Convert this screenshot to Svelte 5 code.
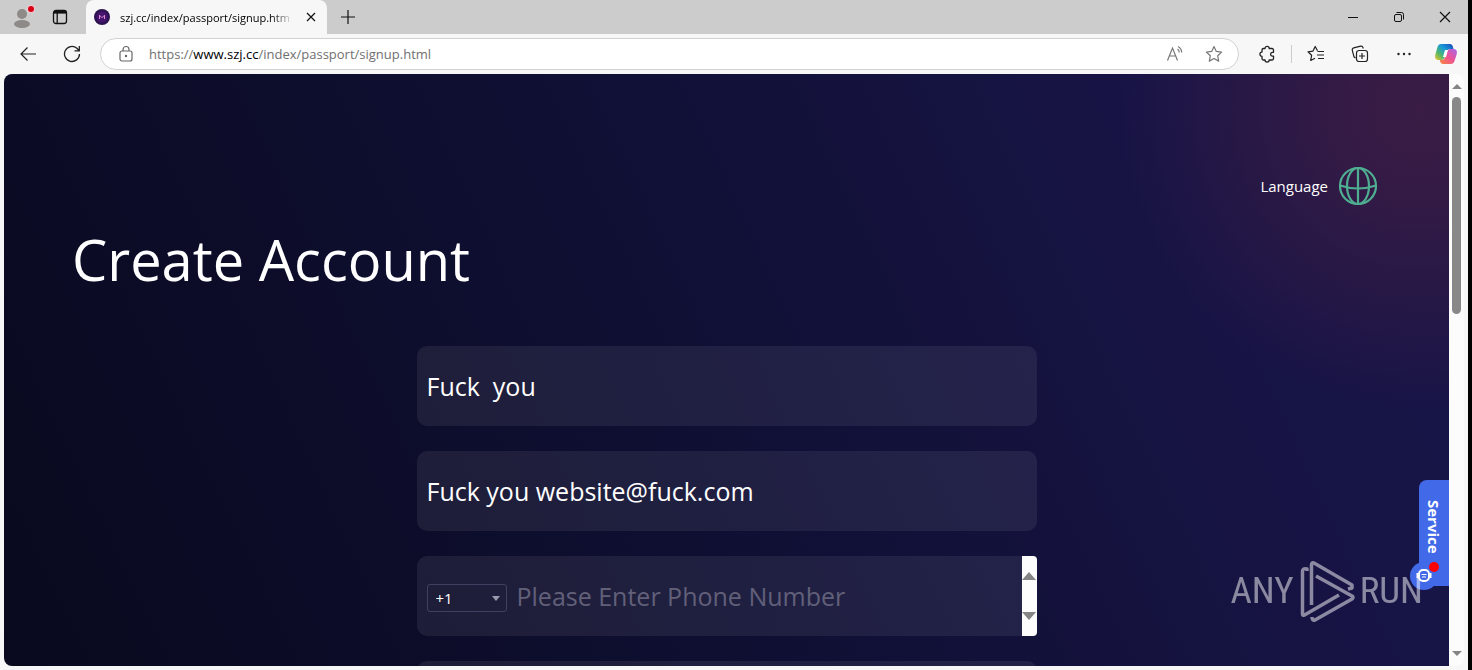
<script lang="ts">
  let name = $state('Fuck  you');
  let email = $state('Fuck you website@fuck.com');
  let phone = $state('');
  let password = $state('');
  let code = $state('+1');
</script>

<div class="window">
  <header class="tabs">
    <button class="icon profile" type="button" aria-label="Profile">
      <svg width="26" height="26" viewBox="0 0 26 26">
        <circle cx="13" cy="10" r="5" fill="#8d8a88" />
        <ellipse cx="13" cy="20" rx="8" ry="4" fill="#8d8a88" />
        <circle cx="22" cy="5" r="4" fill="#f3c9cd" />
        <circle cx="22" cy="5" r="3" fill="#d80015" />
      </svg>
    </button>
    <button class="icon workspaces" type="button" aria-label="Tab actions">
      <svg width="16" height="16" viewBox="0 0 16 16" fill="none" stroke="#111" stroke-width="1.3">
        <rect x="1.5" y="1.5" width="13" height="13" rx="2.5" />
        <path d="M1.5 3.8h13M5.2 4v10.5" />
        <path d="M2 3h12" stroke-width="2.4" />
      </svg>
    </button>
    <div class="tab">
      <svg width="16" height="16" viewBox="0 0 16 16">
        <circle cx="8" cy="8" r="8" fill="#2c1250" />
        <circle cx="8" cy="8" r="5.5" fill="#44146e" />
        <path d="M5.5 10V6.2L8 8.8l2.5-2.6V10" fill="none" stroke="#e08ad0" />
      </svg>
      <span class="tab-title">szj.cc/index/passport/signup.htm</span>
      <button class="icon close-tab" type="button" aria-label="Close tab">
        <svg width="10" height="10" viewBox="0 0 10 10" stroke="#111" stroke-width="1.2"><path d="M1 1l8 8M9 1L1 9" /></svg>
      </button>
    </div>
    <button class="icon new-tab" type="button" aria-label="New tab">
      <svg width="14" height="14" viewBox="0 0 14 14" stroke="#111" stroke-width="1.2"><path d="M7 0v14M0 7h14" /></svg>
    </button>
    <div class="controls">
      <button class="icon" type="button" aria-label="Minimize">
        <svg width="12" height="12" viewBox="0 0 12 12" stroke="#111"><path d="M1 6.5h10" /></svg>
      </button>
      <button class="icon" type="button" aria-label="Restore">
        <svg width="12" height="12" viewBox="0 0 12 12" fill="none" stroke="#111">
          <rect x="1.5" y="3.5" width="7" height="7" rx="1.5" />
          <path d="M3.5 1.5h5a2 2 0 0 1 2 2v5" />
        </svg>
      </button>
      <button class="icon" type="button" aria-label="Close window">
        <svg width="12" height="12" viewBox="0 0 12 12" stroke="#111" stroke-width="1.2"><path d="M1 1l10 10M11 1L1 11" /></svg>
      </button>
    </div>
  </header>

  <nav class="toolbar">
    <button class="icon" type="button" aria-label="Back">
      <svg width="18" height="16" viewBox="0 0 18 16" fill="none" stroke="#222" stroke-width="1.2"><path d="M17 8H2M8.5 1.5L2 8l6.5 6.5" /></svg>
    </button>
    <button class="icon" type="button" aria-label="Refresh">
      <svg width="18" height="18" viewBox="0 0 18 18" fill="none" stroke="#222" stroke-width="1.3">
        <path d="M16.5 9a7.5 7.5 0 1 1-2.6-5.7L16 5.5M16.3 1v4.8h-4.8" />
      </svg>
    </button>
    <div class="address">
      <svg width="16" height="18" viewBox="0 0 16 18" fill="none" stroke="#666" stroke-width="1.2">
        <rect x="2" y="6" width="12" height="10" rx="2" />
        <path d="M5 6V4.5a3 3 0 0 1 6 0V6" />
        <circle cx="8" cy="11" r=".6" fill="#666" />
      </svg>
      <a class="url" href="#top">https://<b>www.szj.cc</b>/index/passport/signup.html</a>
      <svg width="18" height="18" viewBox="0 0 18 18" fill="none" stroke="#777" stroke-width="1.2">
        <path d="M1.5 15.5L6.5 3l5 12.5M3.2 11h6.6M11.5 4a4 4 0 0 1 1.7 3.5M12 1.5a7 7 0 0 1 3.7 6" />
      </svg>
      <svg class="star" width="18" height="18" viewBox="0 0 18 18" fill="none" stroke="#777" stroke-width="1.2">
        <path stroke-linejoin="round" d="M9 1.5l2.3 4.9 5.3.7-3.9 3.7 1 5.3L9 13.5l-4.7 2.6 1-5.3L1.4 7.1l5.3-.7z" />
      </svg>
    </div>
    <div class="tools">
      <button class="icon" type="button" aria-label="Extensions">
        <svg width="18" height="18" viewBox="0 0 18 18" fill="none" stroke="#222" stroke-width="1.3">
          <path stroke-linejoin="round" d="M7 3.5a2.1 2.1 0 0 1 4.2 0h2.8a1.5 1.5 0 0 1 1.5 1.5v2.3h-1a1.9 1.9 0 0 0 0 3.8h1v2.4a1.5 1.5 0 0 1-1.5 1.5h-2.8a2.1 2.1 0 0 1-4.2 0H5.5A1.5 1.5 0 0 1 4 13.5v-2.2a2.1 2.1 0 0 1 0-4.2V5a1.5 1.5 0 0 1 1.5-1.5z" />
        </svg>
      </button>
      <i class="divider"></i>
      <button class="icon" type="button" aria-label="Favorites">
        <svg width="18" height="18" viewBox="0 0 18 18" fill="none" stroke="#222" stroke-width="1.2">
          <path stroke-linejoin="round" d="M10.5 5.8L8.2 1.5 6 6.1l-5 .7 3.6 3.5-.9 5.2L8 13.2M10.5 6.5h6.5M10 10h7M11 13.5h6" />
        </svg>
      </button>
      <button class="icon" type="button" aria-label="Collections">
        <svg width="18" height="18" viewBox="0 0 18 18" fill="none" stroke="#222" stroke-width="1.2">
          <rect x="5.5" y="5.5" width="11" height="11" rx="2.5" />
          <path d="M11 8v6M8 11h6M4.5 13L3 11.8 1.3 5.4a2 2 0 0 1 1.4-2.5l7-1.7a2 2 0 0 1 2.3 1.4l.3.9" />
        </svg>
      </button>
      <button class="icon" type="button" aria-label="Settings and more">
        <svg width="18" height="18" viewBox="0 0 18 18" fill="#222"><circle cx="3.5" cy="9" r="1.2" /><circle cx="9" cy="9" r="1.2" /><circle cx="14.5" cy="9" r="1.2" /></svg>
      </button>
      <button class="icon copilot" type="button" aria-label="Copilot">
        <svg width="24" height="24" viewBox="0 0 24 24">
          <defs>
            <linearGradient id="cool" x1="0" y1="1" x2="1" y2="0">
              <stop offset="0" stop-color="#f3c52c" /><stop offset=".3" stop-color="#55b767" /><stop offset=".6" stop-color="#179bd7" /><stop offset="1" stop-color="#1947b9" />
            </linearGradient>
            <linearGradient id="warm" x1="1" y1="0" x2="0" y2="1">
              <stop offset="0" stop-color="#a566ee" /><stop offset=".5" stop-color="#ef5293" /><stop offset="1" stop-color="#f98b3a" />
            </linearGradient>
          </defs>
          <path d="M7 2h9q2 0 2.7 2l.8 3h-3q-3 0-4 3l-1.7 5q-1 3-3.5 3H5c-4 0-4.5-2.5-3.5-6l2-7Q4.5 2 7 2z" fill="url(#cool)" />
          <path d="M17 22H9q-2 0-2.7-2L5.7 18h2q2.5 0 3.5-3l1.7-5q1-3 3.6-3H19c4 0 4.5 2.5 3.5 6l-2 6q-1 3-3.5 3z" fill="url(#warm)" />
          <path d="M11 8h3l-2 7H9z" fill="#fff" />
        </svg>
      </button>
    </div>
  </nav>

  <div class="viewport">
    <main class="page" id="top">
      <div class="language">
        <span>Language</span>
        <button class="icon" type="button" aria-label="Choose language">
          <svg width="40" height="40" viewBox="0 0 40 40" fill="none" stroke="#4fae91" stroke-width="2.2">
            <circle cx="20" cy="20" r="18" />
            <ellipse cx="20" cy="20" rx="11" ry="18" />
            <path d="M20 2v36M2 19.5q18 6 36 0" />
          </svg>
        </button>
      </div>
      <h1>Create Account</h1>
      <form>
        <input class="field" aria-label="Name" bind:value={name} />
        <input class="field" aria-label="Email" bind:value={email} />
        <div class="field phone">
          <select aria-label="Country code" bind:value={code}>
            <option>+1</option>
            <option>+44</option>
            <option>+86</option>
          </select>
          <input aria-label="Phone number" placeholder="Please Enter Phone Number" bind:value={phone} />
          <div class="stepper">
            <i class="up"></i>
            <i class="down"></i>
          </div>
        </div>
        <input class="field" type="password" aria-label="Password" bind:value={password} />
      </form>

      <button class="service" type="button">
        Service
        <svg width="32" height="30" viewBox="0 0 32 30">
          <circle cx="15" cy="15" r="14" fill="#4169e8" />
          <rect x="10" y="9" width="10" height="11" rx="4" fill="none" stroke="#fff" stroke-width="2" />
          <path d="M8.5 12v5M21.5 12v5" stroke="#fff" stroke-width="2" />
          <path d="M12.5 13.5h5M13 16h4" stroke="#fff" />
          <circle cx="25" cy="6" r="5" fill="#f00" />
        </svg>
      </button>

      <div class="watermark">
        <span>ANY</span>
        <svg width="58" height="64" viewBox="0 0 58 64" fill="none" stroke="currentColor" stroke-width="3.5" stroke-linejoin="round">
          <path d="M9 12v-2q-4.500-1-4.500 2v43q0 2 2 1L41 36" />
          <path d="M50 30l4-1v-3L16 4q-2.500-1-2.500 2v40" />
          <path d="M18 17l36 20q2 1.500 0 3L17 61q-3 1-3-3" />
        </svg>
        <span>RUN</span>
      </div>
    </main>
    <div class="scrollbar">
      <i class="up"></i>
      <div class="thumb"></div>
      <i class="down"></i>
    </div>
  </div>
</div>

<style>
  :global(body) {
    margin: 0;
    background: #000;
  }
  .window {
    box-sizing: border-box;
    display: flex;
    flex-direction: column;
    height: 100vh;
    margin-right: 4px;
    overflow: hidden;
    background: #f7f7f7;
    font-family: 'Open Sans', 'Noto Sans', sans-serif;
  }
  .icon {
    display: flex;
    align-items: center;
    justify-content: center;
    flex: none;
    padding: 0;
    border: none;
    background: transparent;
  }
  svg { flex: none; }

  .tabs {
    display: flex;
    flex: none;
    height: 34px;
    background: #ccc;
  }
  .profile { width: 44px; }
  .workspaces { width: 32px; }
  .tab {
    box-sizing: border-box;
    display: flex;
    align-items: center;
    gap: 10px;
    width: 241px;
    margin-left: 10px;
    padding: 0 8px;
    border-radius: 8px 8px 0 0;
    background: #f7f7f7;
  }
  .tab-title {
    flex: 1;
    font-size: 11px;
    white-space: nowrap;
    color: #000;
    mask-image: linear-gradient(to right, #000 88%, transparent);
  }
  .close-tab { width: 16px; }
  .new-tab { width: 42px; }
  .controls {
    display: flex;
    margin-left: auto;
  }
  .controls .icon { width: 46px; }

  .toolbar {
    display: flex;
    align-items: center;
    flex: none;
    height: 40px;
    padding: 0 2px 0 6px;
  }
  .toolbar > .icon { width: 44px; }
  .address {
    box-sizing: border-box;
    display: flex;
    align-items: center;
    flex: 1;
    height: 32px;
    margin-left: 6px;
    padding: 0 15px 0 17px;
    border: 1px solid #d2d2d2;
    border-radius: 16px;
    background: #fff;
  }
  .url {
    flex: 1;
    margin-left: 15px;
    font-size: 13px;
    color: #707070;
    text-decoration: none;
  }
  .url b {
    font-weight: 400;
    color: #000;
  }
  .star { margin-left: 21px; }
  .tools {
    display: flex;
    align-items: center;
    margin-left: 6px;
  }
  .tools .icon { width: 44px; }
  .tools .copilot { width: 40px; }
  .divider {
    width: 1px;
    height: 18px;
    margin: 0 2px;
    background: #ccc;
  }

  .viewport {
    display: flex;
    flex: 1;
    min-height: 0;
    margin: 0 4px 4px;
    border-radius: 8px;
    overflow: hidden;
    background: #fcfcfc;
  }
  .page {
    position: relative;
    flex: 1;
    overflow: hidden;
    color: #fff;
    background:
      radial-gradient(circle at 98% 6%, #3a1c44 0, rgba(54, 27, 69, 0.9) 90px, rgba(24, 21, 72, 0) 300px),
      linear-gradient(65deg, #090a1e 0%, #0c0c28 22%, #0f0f33 45%, #15133f 70%, #171446 82%, #181548 100%);
  }
  .language {
    display: flex;
    align-items: center;
    justify-content: flex-end;
    gap: 10px;
    padding: 92px 71px 0 0;
    font-size: 15px;
  }
  h1 {
    margin: 15px 0 0 68px;
    font-size: 56px;
    font-weight: 400;
    line-height: 76px;
  }
  form {
    display: flex;
    flex-direction: column;
    gap: 25px;
    width: 620px;
    margin: 49px auto 0;
  }
  .field {
    box-sizing: border-box;
    width: 100%;
    height: 80px;
    padding: 0 10px;
    border: none;
    border-radius: 10px;
    outline: none;
    background: rgba(255, 255, 255, 0.07);
    font-family: inherit;
    font-size: 25px;
    color: #fff;
  }
  .phone {
    display: flex;
    align-items: center;
    gap: 10px;
    padding-right: 0;
    border-radius: 10px 4px 4px 10px;
    overflow: hidden;
  }
  .phone select {
    width: 80px;
    height: 28px;
    margin-top: 4px;
    padding: 0 8px;
    border: 1px solid #414061;
    border-radius: 3px;
    appearance: none;
    background: url("data:image/svg+xml,%3Csvg xmlns='http://www.w3.org/2000/svg' width='8' height='5'%3E%3Cpath d='M0 0h8L4 5z' fill='%239a9aad'/%3E%3C/svg%3E") no-repeat right 6px center;
    font-family: inherit;
    font-size: 15px;
    color: #fff;
  }
  .phone input {
    flex: 1;
    min-width: 0;
    padding: 0;
    border: none;
    outline: none;
    background: transparent;
    font-family: inherit;
    font-size: 25px;
    color: #fff;
  }
  .phone input::placeholder { color: #626079; }
  .stepper {
    box-sizing: border-box;
    display: flex;
    flex-direction: column;
    align-items: center;
    justify-content: space-between;
    width: 15px;
    height: 100%;
    padding: 16px 0;
    background: #fcfcfc;
  }
  .up,
  .down {
    border: 5px solid transparent;
    border-top: none;
    border-bottom: 5px solid #858585;
  }
  .down {
    border-top: 5px solid #858585;
    border-bottom: none;
  }
  .stepper .up,
  .stepper .down {
    border-right-width: 7px;
    border-left-width: 7px;
  }
  .stepper .up { border-bottom-width: 8px; }
  .stepper .down { border-top-width: 8px; }

  .service {
    position: absolute;
    right: 0;
    bottom: 80px;
    box-sizing: border-box;
    width: 30px;
    height: 106px;
    padding: 20px 0 0;
    border: none;
    border-radius: 8px 0 0 8px;
    background: #4169e8;
    font-family: inherit;
    font-size: 15px;
    font-weight: 700;
    line-height: 30px;
    text-align: left;
    writing-mode: vertical-rl;
    color: #fff;
  }
  .service svg {
    position: absolute;
    right: 8px;
    bottom: -5px;
  }
  .watermark {
    position: absolute;
    right: 26px;
    bottom: 43px;
    display: flex;
    align-items: center;
    gap: 4px;
    font-family: 'Roboto Condensed', 'Liberation Sans Narrow', sans-serif;
    font-size: 37px;
    line-height: 64px;
    color: #fff;
    opacity: 0.5;
    pointer-events: none;
  }

  .scrollbar {
    box-sizing: border-box;
    display: flex;
    flex-direction: column;
    align-items: center;
    width: 15px;
    padding: 10px 0;
  }
  .thumb {
    width: 9px;
    height: 38%;
    margin: 8px 0 auto;
    border-radius: 5px;
    background: #888;
  }
</style>
